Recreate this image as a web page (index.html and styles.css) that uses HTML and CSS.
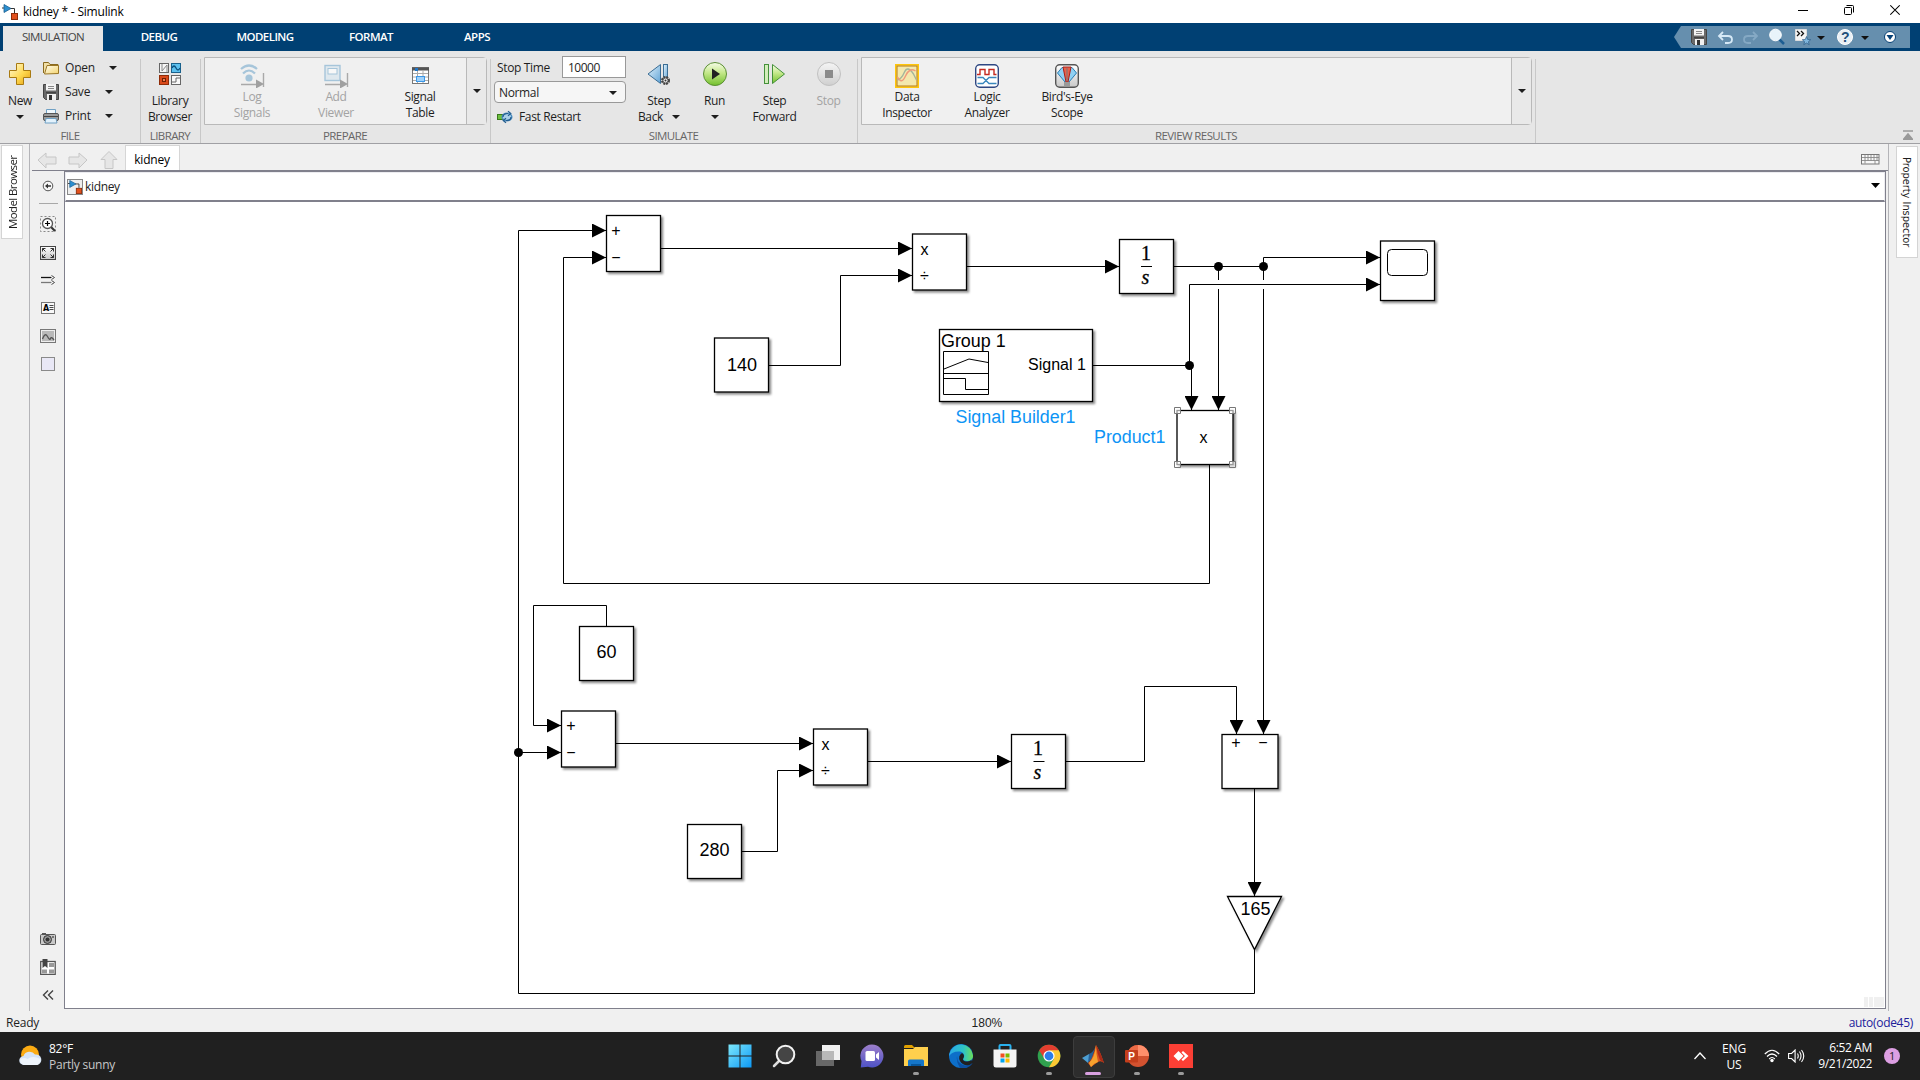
FILE: index.html
```html
<!DOCTYPE html>
<html lang="en">
<head>
<meta charset="utf-8">
<title>kidney * - Simulink</title>
<link rel="stylesheet" href="styles.css">
</head>
<body>
<svg class="defs" width="0" height="0" aria-hidden="true">
  <defs>
    <linearGradient id="gold" x1="0" y1="0" x2="1" y2="1"><stop offset="0" stop-color="#fffbe0"/><stop offset=".55" stop-color="#ffd94f"/><stop offset="1" stop-color="#e09a10"/></linearGradient>
    <linearGradient id="folder" x1="0" y1="0" x2="1" y2="1"><stop offset="0" stop-color="#fffdf0"/><stop offset="1" stop-color="#f3d36c"/></linearGradient>
    <linearGradient id="green" x1="0" y1="0" x2="0" y2="1"><stop offset="0" stop-color="#f6fce8"/><stop offset=".45" stop-color="#c4e88a"/><stop offset="1" stop-color="#72c02c"/></linearGradient>
    <linearGradient id="blue" x1="0" y1="0" x2="1" y2="1"><stop offset="0" stop-color="#e4f3fc"/><stop offset="1" stop-color="#5fa3d6"/></linearGradient>
    <linearGradient id="grey" x1="0" y1="0" x2="0" y2="1"><stop offset="0" stop-color="#f5f5f5"/><stop offset="1" stop-color="#cfcfcf"/></linearGradient>
    <linearGradient id="paper" x1="0" y1="0" x2="0" y2="1"><stop offset="0" stop-color="#fff"/><stop offset="1" stop-color="#c8c8c8"/></linearGradient>
    <symbol id="i-model" viewBox="0 0 16 16"><path d="M0 4h3M8 4.500h4.500V9" fill="none" stroke="#333" stroke-width="1"/><path d="M2 .5v8l7-4z" fill="#2b8fd0" stroke="#1d5f91" stroke-width=".8"/><rect x="9.500" y="9.500" width="6" height="6" fill="#e2501c" stroke="#8c2c0a"/></symbol>
    <symbol id="i-save" viewBox="0 0 16 16"><path d="M.5.5h15v15h-13l-2-2z" fill="#6a6a6a" stroke="#444"/><rect x="3" y="0" width="10" height="6.500" fill="#f4f4f4"/><path d="M5 2.500h6M5 4.500h6" stroke="#888"/><rect x="3" y="8" width="10" height="1.500" fill="#444"/><rect x="4" y="10" width="9" height="6" fill="#f0f0f0"/><rect x="6" y="11" width="3" height="5" fill="#333"/></symbol>
    <symbol id="i-caret" viewBox="0 0 8 4"><path d="M0 0h8L4 4z" fill="currentColor"/></symbol>
    <filter id="shadow" x="-20%" y="-20%" width="150%" height="150%"><feDropShadow dx="2" dy="2" stdDeviation="1.300" flood-color="#000" flood-opacity=".45"/></filter>
    <marker id="arrow" viewBox="0 0 14 14" refX="14" refY="7" markerWidth="14" markerHeight="14" markerUnits="userSpaceOnUse" orient="auto"><path d="M0 0L14 7L0 14z"/></marker>
  </defs>
</svg>

<header class="titlebar">
  <svg class="app-icon" width="16" height="16"><use href="#i-model"/></svg>
  <span class="app-title">kidney * - Simulink</span>
  <div class="window-buttons">
    <svg width="10" height="16" viewBox="0 0 10 16"><path d="M0 8.500h10" stroke="#000"/></svg>
    <svg width="10" height="16" viewBox="0 0 10 16" fill="none" stroke="#000"><rect x=".5" y="5.500" width="7" height="7" rx="1"/><path d="M2.500 3.500h6q1 0 1 1v6"/></svg>
    <svg width="10" height="16" viewBox="0 0 10 16"><path d="M.3 3.300l9.400 9.400M9.700 3.300L.3 12.700" stroke="#000" stroke-width="1.100"/></svg>
  </div>
</header>

<nav class="tabs">
  <div class="tab active">SIMULATION</div><div class="tab t2">DEBUG</div><div class="tab t3">MODELING</div><div class="tab t4">FORMAT</div><div class="tab t5">APPS</div>
  <div class="quick">
    <svg width="236" height="22" viewBox="1674 26 236 22">
      <path d="M1681 26h229v22h-229l-7-11z" fill="#668fae"/>
      <use href="#i-save" x="1691" y="29" width="16" height="16"/>
      <path d="M1723 32l-4 4 4 4M1720 36h8q4 0 4 3.500t-4 3.500h-3" fill="none" stroke="#d6e9f6" stroke-width="1.800"/>
      <path d="M1753 32l4 4-4 4M1756 36h-8q-4 0-4 3.500t4 3.500h3" fill="none" stroke="#85a9c4" stroke-width="1.800"/>
      <path d="M1779 39l5 5" stroke="#1d5d92" stroke-width="2.500"/><circle cx="1775.500" cy="35" r="5.800" fill="#e8f3fa" stroke="#fff"/>
      <path d="M1795.500 29.500h11v11h-11z" fill="#f4f4f4" stroke="#ddd"/><path d="M1797 31l2.500 2.500-2.500 2.500M1801 31l2.500 2.500-2.500 2.500" fill="none" stroke="#111" stroke-width="1.300"/>
      <path d="M1806.500 36.500l1.200 3 3 .2-2.300 2 .8 3-2.700-1.700-2.700 1.700.8-3-2.300-2 3-.2z" fill="#7fb6dd" stroke="#2c5c86" stroke-width=".7"/>
      <use href="#i-caret" x="1817" y="36" width="8" height="4" color="#111"/>
      <circle cx="1845" cy="37" r="7.500" fill="#e9eff4" stroke="#fff"/><text x="1845" y="42" text-anchor="middle" class="help-mark">?</text>
      <use href="#i-caret" x="1861" y="36" width="8" height="4" color="#111"/>
      <circle cx="1890" cy="37" r="5.500" fill="#fff" stroke="#054075" stroke-width="1"/><path d="M1886.500 35h7l-3.500 5z" fill="#054075"/>
    </svg>
  </div>
</nav>

<section class="ribbon">
  <div class="group g-file">
    <div class="group-body">
      <div class="big new">
        <svg width="22" height="22" viewBox="0 0 22 22"><path d="M7.500.5h7v7h7v7h-7v7h-7v-7h-7v-7h7z" fill="url(#gold)" stroke="#a87a12"/></svg>
        <span>New</span><svg class="caret" width="8" height="4"><use href="#i-caret"/></svg>
      </div>
      <div class="file-rows">
        <div class="file-row"><svg width="16" height="14" viewBox="0 0 16 14"><path d="M.5 12V1.500h5l1.500 2h8V6" fill="#f1dfa6" stroke="#8a6a1f"/><path d="M1.500 13L4 4.500h11.500v8z" fill="url(#folder)" stroke="#9a7625"/></svg><span class="w1">Open</span><svg width="8" height="4"><use href="#i-caret"/></svg></div>
        <div class="file-row"><svg width="16" height="16"><use href="#i-save"/></svg><span>Save</span><svg width="8" height="4"><use href="#i-caret"/></svg></div>
        <div class="file-row"><svg width="16" height="16" viewBox="0 0 16 16"><path d="M3.500 6V1.500h9V6" fill="#eef7fd" stroke="#6fa0c4"/><rect x=".5" y="5.500" width="15" height="7" rx="1.500" fill="#9a9a9a" stroke="#555"/><path d="M1 8.500h14" stroke="#444"/><path d="M3 10.500h10l1 4.500H2z" fill="#e3f2fc" stroke="#6fa0c4"/></svg><span>Print</span><svg width="8" height="4"><use href="#i-caret"/></svg></div>
      </div>
    </div>
    <div class="group-label">FILE</div>
  </div>

  <div class="group g-library">
    <div class="group-body">
      <div class="big">
        <svg width="22" height="22" viewBox="0 0 22 22"><rect x=".5" y=".5" width="9" height="9" fill="#f6f6f6" stroke="#666"/><path d="M3 1v7l5-6v7" fill="none" stroke="#888"/><rect x="12.500" y=".5" width="9" height="9" fill="#5cc0ee" stroke="#19618c"/><path d="M13 5q2-4 4 0t4 0" fill="none" stroke="#0b4f7c" stroke-width="1.300"/><rect x=".5" y="12.500" width="9" height="9" fill="#d9491a" stroke="#8f2c08"/><rect x="3.500" y="15.500" width="3" height="3" fill="#ef8050" stroke="#6d1f04"/><rect x="12.500" y="12.500" width="9" height="9" fill="#f8f8f8" stroke="#666"/><path d="M13 19h4v-4h4" fill="none" stroke="#666"/></svg>
        <span>Library</span><span>Browser</span>
      </div>
    </div>
    <div class="group-label">LIBRARY</div>
  </div>

  <div class="group g-prepare">
    <div class="group-body">
      <div class="gallery">
        <div class="tool disabled"><svg width="26" height="24" viewBox="0 0 26 24"><path d="M2 5q8-7 16 0M4 9.500q6-6 12 0" fill="none" stroke="#a6c5da" stroke-width="2.200"/><circle cx="10" cy="14" r="3.600" fill="#a6c5da"/><path d="M2 20.500h16M24.500 9v14" stroke="#a9a9a9" stroke-width="1.400"/><path d="M17 15.500v9l8-4.500z" fill="#a0a0a0"/></svg><span>Log</span><span>Signals</span></div>
        <div class="tool disabled"><svg width="26" height="24" viewBox="0 0 26 24"><rect x="2" y="1.500" width="15" height="15" fill="#dfe8ee" stroke="#a6c5da" stroke-width="1.400"/><rect x="5" y="4.500" width="9" height="5.500" fill="#f8f8f8" stroke="#a6c5da"/><path d="M2 20.500h16M24.500 9v14" stroke="#a9a9a9" stroke-width="1.400"/><path d="M17 15.500v9l8-4.500z" fill="#a0a0a0"/></svg><span>Add</span><span>Viewer</span></div>
        <div class="tool"><svg width="26" height="24" viewBox="0 0 26 24"><rect x="5.500" y="3.500" width="16" height="16" fill="#fff" stroke="#777"/><path d="M5 5h17" stroke="#555" stroke-width="3"/><path d="M8 5.500h3" stroke="#1f75c7" stroke-width="3"/><path d="M6 9.500h15M6 13h15M6 16.500h15M10.500 7v12M16 7v12" stroke="#aaa"/><rect x="9.500" y="12.500" width="8" height="5" fill="#9fd1fa" stroke="#3c97e6"/></svg><span>Signal</span><span>Table</span></div>
        <div class="gallery-more"><svg width="8" height="4"><use href="#i-caret"/></svg></div>
      </div>
    </div>
    <div class="group-label">PREPARE</div>
  </div>

  <div class="group g-simulate">
    <div class="group-body">
      <div class="sim-form">
        <div class="stop-row"><span>Stop Time</span><div class="field">10000</div></div>
        <div class="select"><span>Normal</span><svg width="8" height="4"><use href="#i-caret"/></svg></div>
        <div class="restart"><svg width="16" height="14" viewBox="0 0 16 14"><rect x=".5" y="4.500" width="5" height="5" fill="#6fc040" stroke="#3a7a1c"/><ellipse cx="10" cy="7" rx="4.800" ry="3.800" fill="#a9cfe8" stroke="#4d8dc0" stroke-width="1.500"/><path d="M6 7q0-3.500 5-3.500M11 1.200l2.800 2.300L11 5.800M14 7q0 3.500-5 3.500M9 8.200l-2.800 2.300L9 12.800" fill="none" stroke="#235d8e" stroke-width="1.200"/></svg><span>Fast Restart</span></div>
      </div>
      <div class="big s-back">
        <svg width="24" height="24" viewBox="0 0 24 24"><path d="M13.500 2.500v19L1 12z" fill="url(#blue)" stroke="#3b6d94"/><rect x="16.500" y="2.500" width="4" height="16" fill="url(#blue)" stroke="#3b6d94"/><circle cx="18.500" cy="18.500" r="3.500" fill="#eee" stroke="#444" stroke-width="2" stroke-dasharray="2 .8"/><circle cx="18.500" cy="18.500" r="2.600" fill="#eee" stroke="#444"/><circle cx="18.500" cy="18.500" r="1" fill="#333"/></svg>
        <span>Step</span><span class="with-caret">Back <svg width="8" height="4"><use href="#i-caret"/></svg></span>
      </div>
      <div class="big s-run">
        <svg width="24" height="24" viewBox="0 0 24 24"><circle cx="12" cy="12" r="11.500" fill="url(#green)" stroke="#5b8f35"/><path d="M9 6.500v11l8-5.500z" fill="#222"/></svg>
        <span>Run</span><svg class="caret" width="8" height="4"><use href="#i-caret"/></svg>
      </div>
      <div class="big s-fwd">
        <svg width="24" height="24" viewBox="0 0 24 24"><rect x="1.500" y="2.500" width="4" height="19" fill="#d3edbb" stroke="#44913a"/><path d="M9.500 2.500v19l12-9.500z" fill="url(#green)" stroke="#44913a"/></svg>
        <span>Step</span><span>Forward</span>
      </div>
      <div class="big s-stop disabled">
        <svg width="24" height="24" viewBox="0 0 24 24"><circle cx="12" cy="12" r="11.500" fill="url(#grey)" stroke="#c0c0c0"/><rect x="8" y="8" width="8" height="8" fill="#8b8b8b"/></svg>
        <span>Stop</span>
      </div>
    </div>
    <div class="group-label">SIMULATE</div>
  </div>

  <div class="group g-review">
    <div class="group-body">
      <div class="gallery">
        <div class="tool"><svg width="24" height="24" viewBox="0 0 24 24"><rect x=".8" y=".8" width="22.400" height="22.400" fill="#f3e8ae" stroke="#ffc60a" stroke-width="1.600"/><rect x="2" y="2" width="20" height="20" fill="none" stroke="#b87c12"/><path d="M2.500 16q4-1 7-8t9 2l3 6" fill="none" stroke="#a3b59c" stroke-width="1.400"/><path d="M2.500 13q4 8 8-1t10-5" fill="none" stroke="#ef9a7b" stroke-width="1.400"/></svg><span>Data</span><span>Inspector</span></div>
        <div class="tool"><svg width="24" height="24" viewBox="0 0 24 24"><rect x=".7" y=".7" width="22.600" height="22.600" rx="4" fill="#fff" stroke="#2e4782" stroke-width="1.400"/><path d="M2 10.500h3v-5h5v5h4v-5h5v5h2.500" fill="none" stroke="#c42a20" stroke-width="1.400"/><path d="M2.500 13.500H8l6 6h7.500M2.500 19.500H8l6-6h7.500" fill="none" stroke="#3a87bd" stroke-width="1.300"/></svg><span>Logic</span><span>Analyzer</span></div>
        <div class="tool"><svg width="24" height="24" viewBox="0 0 24 24"><rect x=".7" y=".7" width="22.600" height="22.600" rx="4" fill="url(#paper)" stroke="#555" stroke-width="1.400"/><path d="M10 18L2.500 9 7 3.500h10L21.500 9 14 18z" fill="#8fd0f3" stroke="#277db4"/><path d="M8 3h8l-3 15h-2z" fill="#e8604a" stroke="#a82019"/><path d="M9 18h6v4.500H9z" fill="#999"/><path d="M12 4v13" stroke="#777"/></svg><span>Bird's-Eye</span><span>Scope</span></div>
        <div class="gallery-more"><svg width="8" height="4"><use href="#i-caret"/></svg></div>
      </div>
    </div>
    <div class="group-label">REVIEW RESULTS</div>
  </div>
  <div class="ribbon-end"><svg width="10" height="10" viewBox="0 0 10 10"><path d="M0 1h10M0 10l5-6 5 6z" fill="#999" stroke="#999" stroke-width="1.500"/></svg></div>
</section>

<main class="workspace">
  <aside class="side left"><div class="side-tab model">Model Browser</div></aside>
  <section class="editor">
    <div class="doc-row">
      <svg class="nav-icons" width="82" height="18" viewBox="37 150 82 18" fill="#e6e6e6" stroke="#c6c6c6">
        <path d="M38 159l8-7v4h10v7H46v4z"/><path d="M87 159l-8-7v4H69v7h10v4z"/><path d="M109 150.500l8 8h-4v9h-8v-9h-4z"/>
      </svg>
      <div class="doc-tab">kidney</div>
      <svg class="keyboard" width="19" height="11" viewBox="0 0 19 11"><rect x=".5" y=".5" width="17.500" height="9.500" fill="#f8f8f8" stroke="#777"/><path d="M1 3.500h17M1 6.500h17M4 .5v9M14 7v3M7 1v6M10 1v6M13 1v6M16 1v6" stroke="#888" stroke-width=".9"/></svg>
    </div>
    <div class="editor-body">
      <div class="palette">
        <svg width="16" height="16" viewBox="0 0 16 16"><circle cx="8" cy="8" r="4.800" fill="#f6f6f6" stroke="#555"/><path d="M11 8H7" stroke="#333" stroke-width="1.500"/><path d="M8 5.500v5L5 8z" fill="#333"/></svg>
        <hr class="palette-line">
        <svg width="16" height="16" viewBox="0 0 16 16"><rect x=".5" y=".5" width="15" height="15" fill="none" stroke="#888" stroke-dasharray="2 2"/><path d="M11 11l4 4" stroke="#333" stroke-width="2.200"/><circle cx="7.500" cy="7.500" r="5" fill="#fff" stroke="#555" stroke-width="1.300"/><path d="M5 7.500h5M7.500 5v5" stroke="#000" stroke-width="1.200"/></svg>
        <svg width="16" height="14" viewBox="0 0 16 14"><rect x=".5" y=".5" width="15" height="13" fill="url(#paper)" stroke="#444"/><path d="M2.500 5.500v-3h3M2.500 2.500l3 3M10.500 2.500h3v3M13.500 2.500l-3 3M2.500 8.500v3h3M2.500 11.500l3-3M13.500 8.500v3h-3M13.500 11.500l-3-3" fill="none" stroke="#333"/></svg>
        <svg width="16" height="12" viewBox="0 0 16 12"><path d="M1 3.500h12" stroke="#111" stroke-width="1.300"/><path d="M1 8.500h12" stroke="#777" stroke-width="1.300"/><path d="M11.500 1.500l3 2-3 2M11.500 6.500l3 2-3 2" fill="#fff" stroke="#444"/></svg>
        <svg width="16" height="14" viewBox="0 0 16 14"><rect x="1.500" y="1.500" width="13" height="11" fill="#f8f8f8" stroke="#777"/><text x="3" y="10" class="note-letter">A</text><path d="M9.500 4.500h4M9.500 6.500h4M9.500 8.500h4" stroke="#333" stroke-width=".9"/></svg>
        <svg width="16" height="14" viewBox="0 0 16 14"><rect x=".5" y=".5" width="15" height="13" fill="#eee" stroke="#777"/><rect x="2" y="2" width="12" height="10" fill="#b9b9b9"/><path d="M2.500 10q2.500-7 5-2.500t3 2 3.500 1.500" fill="none" stroke="#555" stroke-width="1.300"/></svg>
        <svg width="16" height="14" viewBox="0 0 16 14"><rect x="1.500" y=".5" width="13" height="13" fill="#e9e8f6" stroke="#8a8a8a"/></svg>
        <svg class="push" width="16" height="12" viewBox="0 0 16 12"><path d="M2 0h4v2H2z" fill="#555"/><rect x=".5" y="1.500" width="15" height="10" rx="1" fill="#c9c9c9" stroke="#555"/><circle cx="7.500" cy="6.500" r="4" fill="#999" stroke="#333"/><circle cx="7.500" cy="6.500" r="2" fill="#333"/><path d="M12 4h2" stroke="#222"/></svg>
        <svg width="16" height="16" viewBox="0 0 16 16"><rect x=".7" y="2.500" width="14.500" height="13" fill="#fff" stroke="#555" stroke-width="1.300"/><path d="M2 10.500h5v4H2zM9 4h5v4H9zM9 10.500h5v4H9z" fill="#999"/><path d="M2.500 0h5v9L5 7 2.500 9z" fill="#444"/></svg>
        <svg width="16" height="12" viewBox="0 0 16 12"><path d="M8 1.500L3.500 6 8 10.500M13 1.500L8.500 6l4.500 4.500" fill="none" stroke="#444" stroke-width="1.400"/></svg>
      </div>
      <div class="canvas-frame">
        <div class="breadcrumb"><span class="crumb-icon"><svg width="14" height="14"><use href="#i-model"/></svg></span><span>kidney</span><svg class="crumb-caret" width="9" height="5" viewBox="0 0 8 4" preserveAspectRatio="none"><path d="M0 0h8L4 4z"/></svg></div>
        <svg class="diagram" width="1820" height="806" viewBox="65 202 1820 806">
          <g class="blocks" filter="url(#shadow)">
            <rect x="606.500" y="215.500" width="54" height="56"/>
            <rect x="912.500" y="234" width="54" height="56"/>
            <rect x="714.500" y="338" width="54" height="54"/>
            <rect x="1119.500" y="239.500" width="54" height="54"/>
            <rect x="1380.500" y="241" width="54" height="59.500"/>
            <rect x="939.500" y="329.500" width="153" height="72"/>
            <rect x="1177" y="410.500" width="56" height="54"/>
            <rect x="579.500" y="626.500" width="54" height="54"/>
            <rect x="561.500" y="711" width="54" height="56"/>
            <rect x="813.500" y="729" width="54" height="56"/>
            <rect x="687.500" y="824.500" width="54" height="54"/>
            <rect x="1011.500" y="734.500" width="54" height="54"/>
            <rect x="1222" y="734.500" width="56" height="54"/>
            <path d="M1227.500 896.500h54l-27 53z"/>
          </g>
          <g class="wires">
            <path d="M1218.500 266.500V410" marker-end="url(#arrow)"/>
            <path d="M1254.500 950V993.500H518.500V230.500H606" marker-end="url(#arrow)"/>
            <path d="M1209.500 465V583.500H563.500V257.500H606" marker-end="url(#arrow)"/>
            <path d="M661 248.500H912" marker-end="url(#arrow)"/>
            <path d="M769 365.500H840.500V275.500H912" marker-end="url(#arrow)"/>
            <path d="M967 266.500H1119" marker-end="url(#arrow)"/>
            <path d="M1174 266.500H1263.500V257.500H1380" marker-end="url(#arrow)"/>
            <path d="M1263.500 266.500V734" marker-end="url(#arrow)"/>
            <path d="M1218.500 280v9M1263.500 280v9" class="hop"/>
            <path d="M1093 365.500H1189.500V284.500H1380" marker-end="url(#arrow)"/>
            <path d="M1191.500 365.500V410" marker-end="url(#arrow)"/>
            <path d="M606.500 626V605.500H533.500V725.500H561" marker-end="url(#arrow)"/>
            <path d="M518.500 752.500H561" marker-end="url(#arrow)"/>
            <path d="M616 743.500H813" marker-end="url(#arrow)"/>
            <path d="M742 851.500H777.500V770.500H813" marker-end="url(#arrow)"/>
            <path d="M868 761.500H1011" marker-end="url(#arrow)"/>
            <path d="M1066 761.500H1144.500V686.500H1236.500V734" marker-end="url(#arrow)"/>
            <path d="M1254.500 789V896" marker-end="url(#arrow)"/>
          </g>
          <circle cx="1218.500" cy="266.500" r="4.500"/><circle cx="1263.500" cy="266.500" r="4.500"/><circle cx="1189.500" cy="365.500" r="4.500"/><circle cx="518.500" cy="752.500" r="4.500"/>
          <g class="glyphs">
            <rect x="1387.500" y="249.500" width="40" height="26" rx="4"/>
            <path d="M943.500 351.500h45v43h-45zM943.500 373.500h45M944 369l25-10 19 3.500M944 378.500h21.500v11h22.500M1141 266.500h11M1033.500 761.500h11"/>
          </g>
          <g class="handles"><path d="M1174.500 407.500h6v6h-6zM1229.500 407.500h6v6h-6zM1174.500 461.500h6v6h-6zM1229.500 461.500h6v6h-6z"/></g>
          <g class="port">
            <text x="616" y="236">+</text><text x="616" y="263">−</text>
            <text x="924.500" y="255">x</text><text x="924.500" y="281">÷</text>
            <text x="571" y="731">+</text><text x="571" y="758">−</text>
            <text x="825.500" y="750">x</text><text x="825.500" y="776">÷</text>
            <text x="1236" y="748">+</text><text x="1263" y="748">−</text>
            <text x="1203.500" y="443">x</text>
          </g>
          <g class="value">
            <text x="742" y="371">140</text><text x="606.500" y="658">60</text><text x="714.500" y="856">280</text><text x="1255.500" y="915">165</text>
          </g>
          <g class="math"><text x="1146" y="260">1</text><text x="1145.500" y="284" class="var">s</text><text x="1038" y="755">1</text><text x="1037.500" y="779" class="var">s</text></g>
          <text x="941" y="347" class="label">Group 1</text>
          <text x="1028" y="370" class="port-label">Signal 1</text>
          <text x="955.500" y="423" class="name">Signal Builder1</text>
          <text x="1094" y="443" class="name">Product1</text>
          <path d="M1864 997h4v10h-4zM1869 997h4v10h-4zM1874 997h10v10h-10z" fill="#f0f0f0"/>
        </svg>
      </div>
    </div>
  </section>
  <aside class="side right"><div class="side-tab inspector">Property Inspector</div></aside>
</main>

<footer class="status"><span>Ready</span><span class="zoom">180%</span><span class="solver">auto(ode45)</span></footer>

<footer class="taskbar">
  <div class="weather">
    <svg width="24" height="22" viewBox="0 0 24 22"><circle cx="11" cy="9.500" r="9" fill="#fbab13"/><path d="M5 20a4.500 4.500 0 0 1-.5-9 6.500 6.500 0 0 1 11.500-1.500 5.300 5.300 0 0 1 2 10.500z" fill="#d6e4f6"/><path d="M5 20a4.500 4.500 0 0 1-3.500-6q4-2 7 0 5-4 13 0 0 6-5 6z" fill="#eef4fb"/></svg>
    <div class="weather-text"><div class="temp">82°F</div><div class="sky">Partly sunny</div></div>
  </div>
  <div class="apps">
    <div class="app"><svg width="24" height="24" viewBox="0 0 24 24"><defs><linearGradient id="win" gradientUnits="userSpaceOnUse" x1="0" y1="0" x2="24" y2="24"><stop offset="0" stop-color="#7fe9fb"/><stop offset="1" stop-color="#0a97f5"/></linearGradient></defs><path d="M.5.500h11v11h-11zM12.500.500h11v11h-11zM.5 12.500h11v11h-11zM12.500 12.500h11v11h-11z" fill="url(#win)"/></svg></div>
    <div class="app"><svg width="24" height="24" viewBox="0 0 24 24"><path d="M8 16l-6 6" stroke="#ddd" stroke-width="2.500" stroke-linecap="round"/><circle cx="13.500" cy="10.500" r="8.800" fill="#454545" stroke="#f2f2f2" stroke-width="2"/></svg></div>
    <div class="app"><svg width="24" height="24" viewBox="0 0 24 24"><path d="M6 1h18v15H6z" fill="#f1f1f1"/><path d="M0 7h18v15H0z" fill="#686868"/><path d="M6 7h12v9H6z" fill="#b9b9b9"/></svg></div>
    <div class="app"><svg width="24" height="24" viewBox="0 0 24 24"><defs><linearGradient id="chat" x1="0" y1="0" x2="0" y2="1"><stop offset="0" stop-color="#9d7fca"/><stop offset="1" stop-color="#4d52c6"/></linearGradient></defs><path d="M12 .500a11.500 11.500 0 1 1-4 22.300L.800 23.500 1.500 17A11.500 11.500 0 0 1 12 .500z" fill="url(#chat)"/><rect x="5.500" y="7" width="9.500" height="10" rx="1.500" fill="#fff"/><path d="M16 10.500l3-2.500v8l-3-2.500z" fill="#fff"/></svg></div>
    <div class="app run"><svg width="24" height="24" viewBox="0 0 24 24"><path d="M0 2.500Q0 1 1.500 1H8l3 3H0z" fill="#e1a000"/><path d="M0 5h9l2-2h13v19H0z" fill="#ffd04d"/><path d="M4 22v-5q0-1.500 1.500-1.500h13q1.500 0 1.500 1.500v5z" fill="#1576c9"/><path d="M7 22v-2h10v2z" fill="#07569b"/></svg></div>
    <div class="app"><svg width="24" height="24" viewBox="0 0 24 24"><defs><linearGradient id="edge" x1="0" y1="0" x2="1" y2="0"><stop offset="0" stop-color="#2aa9e8"/><stop offset=".6" stop-color="#2fc4c4"/><stop offset="1" stop-color="#6cdf58"/></linearGradient></defs><circle cx="12" cy="12" r="12" fill="#0d6fc9"/><path d="M.3 10A12 12 0 0 1 24 11.500c.2 4-3 5.500-6 5.500s-5-1.500-3.500-3c2-3-.5-6.500-5-6.500S2 9 .3 12z" fill="url(#edge)"/><path d="M8 12q0 8 8 9.500 4 0 6-3l1.500 1A12 12 0 0 1 11 24Q7 18 8 12z" fill="#0b4fa0"/><path d="M14.500 14c-1.500 2 .8 3.700 4 3.500q2.500-.2 4-1.500l1 3-3 2q-7 1-9.500-4t2-8q3 2 1.500 5z" fill="#202020"/></svg></div>
    <div class="app"><svg width="24" height="24" viewBox="0 0 24 24"><path d="M6.500 7V2q0-1 1-1h9q1 0 1 1v5" fill="none" stroke="#29b1ee" stroke-width="2"/><path d="M.500 5.500h23V21q0 2.500-2.500 2.500H3Q.500 23.500.500 21z" fill="#f4f4f4"/><path d="M7.500 9.500h4v4h-4z" fill="#f25022"/><path d="M12.500 9.500h4v4h-4z" fill="#7fba00"/><path d="M7.500 14.500h4v4h-4z" fill="#00a4ef"/><path d="M12.500 14.500h4v4h-4z" fill="#ffb900"/></svg></div>
    <div class="app run"><svg width="24" height="24" viewBox="0 0 24 24"><circle cx="12" cy="12" r="11.300" fill="#30a14e"/><path d="M12 12L2.200 6.300A11.300 11.300 0 0 1 21.800 6.300z" fill="#e33e2f"/><path d="M12 6.300h9.800A11.300 11.300 0 0 1 12 23.300l5-8.500z" fill="#fcc934"/><path d="M2.200 6.300L7.500 15 12 7z" fill="#e33e2f"/><circle cx="12" cy="12" r="5.600" fill="#fff"/><circle cx="12" cy="12" r="4.400" fill="#2b7de9"/></svg></div>
    <div class="app current"><svg width="24" height="24" viewBox="0 0 24 24"><path d="M1 14l7-4 3 3-4 6z" fill="#4d9ed2"/><path d="M8 10q5-2 7-9l-4 13-4 5z" fill="#285f94"/><path d="M15 1q4 6 8 18-3-3-6-1t-7 5l-3-4q4-2 8-18z" fill="#d9531e"/><path d="M15 1q0 9 2 17-4 1-7 5l-2-4q6-6 7-18z" fill="#f6a12d"/><path d="M15 1q4 6 8 18l-4-3q-3-7-4-15z" fill="#a82a18"/></svg></div>
    <div class="app run"><svg width="24" height="24" viewBox="0 0 24 24"><circle cx="13" cy="12" r="11" fill="#d35230"/><path d="M13 1a11 11 0 0 1 11 11H13z" fill="#ff8f6b"/><path d="M2.500 9A11 11 0 0 1 13 1v11H2.500z" fill="#ed6c47"/><rect x="0" y="6" width="13" height="12.500" rx="1" fill="#c43e1c"/><text x="6.500" y="16" text-anchor="middle" class="ppt">P</text></svg></div>
    <div class="app run"><svg width="24" height="24" viewBox="0 0 24 24"><path d="M0 0h24v24H0z" fill="#fb3f35"/><path d="M9.500 7l5 5-5 5-5-5zM12.500 8.500L14 7l5.500 5L14 17l-1.500-1.500L16 12z" fill="#fff"/></svg></div>
  </div>
  <div class="tray">
    <svg width="12" height="8" viewBox="0 0 12 8"><path d="M.5 7L6 1l5.500 6" fill="none" stroke="#fff" stroke-width="1.300"/></svg>
    <div class="lang">ENG<br>US</div>
    <svg width="16" height="14" viewBox="0 0 16 14"><path d="M.800 5q7.200-7.500 14.400 0M3 7.500q5-5 10 0M5.200 10q2.800-3 5.600 0" fill="none" stroke="#fff" stroke-width="1.200"/><circle cx="8" cy="11.500" r="1.700" fill="#fff"/></svg>
    <svg class="sound" width="17" height="14" viewBox="0 0 17 14"><path d="M.600 4.500h3l3.500-3.500v12L3.600 9.500h-3zM9.500 4.500q1.500 2.500 0 5M11.500 2.500q3 4.500 0 9M13.500 1q4.500 6 0 12" fill="none" stroke="#fff" stroke-width="1.100"/></svg>
    <div class="clock">6:52 AM<br>9/21/2022</div>
    <div class="badge">1</div>
  </div>
</footer>
</body>
</html>
```
FILE: styles.css
```css
* { box-sizing: border-box; }
body { margin: 0; width: 1920px; height: 1080px; overflow: hidden; display: flex; flex-direction: column; background: #f0f0f0; color: #1e1e1e; font: 12px/16px "Open Sans", "Noto Sans", sans-serif; letter-spacing: -0.35px; white-space: nowrap; }
svg { display: block; flex: none; }
.defs { position: absolute; }

.titlebar { height: 23px; flex: none; background: #fff; color: #000; display: flex; align-items: center; }
.app-icon { margin: 0 5px 0 2px; }
.app-title { letter-spacing: -0.2px; padding-top: 1px; }
.window-buttons { margin-left: auto; display: flex; gap: 36px; padding-right: 20px; margin-top: -3px; }

.tabs { height: 28px; flex: none; background: #004073; color: #fff; display: flex; padding-left: 3px; }
.tab { margin-top: 3px; height: 25px; line-height: 22px; text-align: center; font-weight: 600; font-size: 11.5px; letter-spacing: -0.55px; }
.tab.active { width: 100px; background: #e6e6e6; color: #444; font-weight: 400; letter-spacing: -0.65px; }
.t2 { width: 112px; }
.t3 { width: 100px; }
.t4 { width: 112px; }
.t5 { width: 100px; }
.quick { margin-left: auto; padding: 3px 10px 0 0; }
.help-mark { font: bold 14px "Liberation Sans", sans-serif; fill: #23507a; }

.ribbon { height: 93px; flex: none; background: #e6e6e6; border-bottom: 1px solid #a0a0a4; display: flex; }
.group { position: relative; display: flex; flex-direction: column; padding-top: 6px; }
.group::after { content: ""; position: absolute; right: -1px; top: 8px; bottom: 0; width: 1px; background: #c8c8c8; }
.group-body { height: 71px; display: flex; }
.group-label { text-align: center; color: #666; line-height: 15px; font-size: 11.5px; letter-spacing: -0.6px; }
.g-file { width: 140px; }
.g-library { width: 60px; }
.g-prepare { width: 290px; padding-left: 4px; }
.g-prepare .group-label { padding-right: 4px; }
.g-simulate { width: 367px; }
.g-review { width: 678px; padding-left: 4px; }
.g-review .group-label { padding-right: 4px; }
.big { display: flex; flex-direction: column; align-items: center; padding-top: 5px; }
.big > svg:first-child { height: 24px; margin-bottom: 7px; }
.big > .caret { margin-top: 6px; }
.new { width: 40px; }
.file-rows { display: flex; flex-direction: column; margin-top: -1px; padding-left: 1px; }
.file-row { height: 24px; display: flex; align-items: center; padding-left: 2px; }
.file-row span { width: 40px; margin-left: 6px; letter-spacing: -0.2px; }
.file-row .w1 { width: 44px; }
.g-library .big { width: 60px; }
.gallery { height: 68px; flex: 1; display: flex; margin-right: 3px; background: #f0f0f0; border: 1px solid #b9b9b9; border-radius: 0 4px 4px 0; }
.tool { display: flex; flex-direction: column; align-items: center; padding-top: 6px; }
.tool svg { margin-bottom: 1px; }
.g-prepare .tool { width: 84px; }
.g-prepare .tool:first-child { margin-left: 5px; }
.g-review .tool { width: 80px; }
.g-review .tool:first-child { margin-left: 5px; }
.gallery-more { margin-left: auto; width: 20px; border-left: 1px solid #b9b9b9; background: #e9e9e9; display: flex; align-items: center; justify-content: center; }
.disabled { color: #a3a3a3; }
.sim-form { width: 138px; padding-left: 4px; }
.stop-row { display: flex; align-items: center; height: 22px; margin-top: -1px; padding-left: 3px; }
.field { margin-left: auto; margin-right: 2px; width: 64px; height: 22px; border: 1px solid #999; background: #fff; padding: 3px 0 0 5px; letter-spacing: -0.5px; }
.select { margin-top: 3px; width: 132px; height: 22px; border: 1px solid #999; border-radius: 4px; background: #f6f6f6; display: flex; align-items: center; justify-content: space-between; padding: 1px 8px 0 4px; }
.stop-row span { padding-top: 1px; }
.restart { display: flex; align-items: center; gap: 6px; height: 27px; padding-left: 3px; }
.with-caret { display: flex; align-items: center; gap: 9px; }
.s-back { width: 62px; }
.s-run { width: 49px; }
.s-fwd { width: 71px; }
.s-stop { width: 37px; }
.ribbon-end { flex: 1; display: flex; align-items: flex-end; justify-content: flex-end; padding: 0 7px 3px 0; }

.workspace { height: 867px; flex: none; display: flex; }
.side { flex: none; }
.left { width: 30px; border-right: 1px solid #b4b4b8; padding: 1px 0 0 1px; }
.right { width: 32px; border-left: 1px solid #b4b4b8; padding: 2px 0 0 7px; }
.side-tab { width: 22px; height: 94px; background: #fff; border: 1px solid #d4d4d4; writing-mode: vertical-rl; text-align: center; line-height: 21px; }
.model { transform: rotate(180deg); font-size: 11.5px; letter-spacing: -0.6px; }
.inspector { height: 112px; font-family: "DejaVu Sans Condensed", "DejaVu Sans", sans-serif; font-size: 11px; letter-spacing: -0.05px; }
.editor { width: 1858px; display: flex; flex-direction: column; }
.doc-row { height: 27px; margin-left: 2px; flex: none; display: flex; align-items: flex-end; border-bottom: 1px solid #80808c; }
.nav-icons { margin: 0 6px 1px 5px; }
.doc-tab { width: 55px; height: 25px; background: #fff; border: 1px solid #d6d6d6; border-bottom: 0; text-align: center; line-height: 28px; color: #000; letter-spacing: -0.2px; padding-right: 1px; }
.keyboard { margin: 0 8px 5px auto; }
.editor-body { display: flex; }
.palette { width: 34px; height: 839px; display: flex; flex-direction: column; align-items: center; padding: 7px 0 9px 2px; }
.palette svg { margin-bottom: 14.2px; }
.palette svg:first-child { margin-bottom: 9px; }
.palette-line { width: 19px; margin: 0 0 12px; border: 0; border-top: 1px solid #a8a8a8; }
.palette .push { margin-top: auto; }
.palette svg:last-child { margin-bottom: 0; }
.note-letter { font: bold 8px "DejaVu Sans", sans-serif; }
.canvas-frame { width: 1822px; height: 838px; border: 1px solid #80808c; background: #fff; }
.breadcrumb { height: 30px; display: flex; align-items: center; border: 1px solid #ececf0; border-bottom: 2px solid #80808c; padding: 1px 4px 0 1px; color: #222; }
.crumb-icon { width: 16px; height: 16px; border: 1px solid #888; background: #eee; margin-right: 2px; }
.crumb-caret { margin: -4px 0 0 auto; }

.blocks > * { fill: #fff; stroke: #000; stroke-width: 1.300; }
.wires path { fill: none; stroke: #000; stroke-width: 1; }
.wires .hop { stroke: #fff; stroke-width: 3; }
.glyphs > * { fill: none; stroke: #000; stroke-width: 1; }
.handles path { fill: #fff; fill-opacity: .6; stroke: #777; }
.diagram text { font-family: "Liberation Sans", sans-serif; letter-spacing: 0; }
.port text { font-size: 16px; text-anchor: middle; }
.value text { font-size: 18px; text-anchor: middle; }
.diagram .label { font-size: 17.900px; }
.diagram .port-label { font-size: 16px; }
.diagram .name { font-size: 17.850px; fill: #0d94f5; }
.diagram .math text { font-family: "Liberation Serif", serif; font-size: 20px; text-anchor: middle; stroke: #000; stroke-width: .3; }
.math .var { font-style: italic; }

.status { height: 21px; flex: none; display: flex; align-items: center; justify-content: space-between; padding: 2px 7px 0 6px; letter-spacing: -0.2px; }
.zoom { font-family: "Liberation Sans", sans-serif; letter-spacing: 0; padding-left: 86px; }
.solver { color: #21219a; letter-spacing: -0.3px; }

.taskbar { height: 48px; flex: none; background: #202020; color: #fff; display: flex; align-items: center; }
.weather { width: 718px; padding-left: 19px; display: flex; align-items: center; gap: 6px; letter-spacing: -0.25px; }
.weather-text { padding-top: 2px; }
.sky { color: #c8c8c8; }
.apps { display: flex; }
.app { position: relative; width: 44.1px; height: 48px; display: flex; align-items: center; justify-content: center; }
.run::after, .current::after { content: ""; position: absolute; bottom: 5px; width: 6px; height: 3px; border-radius: 2px; background: #9a9a9a; }
.current::before { content: ""; position: absolute; left: 2px; top: 4px; width: 40px; height: 40px; border: 1px solid #3d3d3d; border-radius: 4px; background: #2d2d2d; }
.current svg { position: relative; }
.current::after { width: 16px; background: #d8a0e0; }
.tray { margin-left: auto; display: flex; align-items: center; padding-right: 20px; letter-spacing: -0.2px; }
.lang { width: 44px; margin-left: 6px; text-align: center; margin-right: 8px; padding-top: 1px; }
.sound { margin-left: 8px; }
.clock { width: 67px; text-align: right; letter-spacing: -0.35px; }
.badge { margin-left: 12px; width: 16px; height: 16px; border-radius: 8px; background: #dd9fe3; color: #222; text-align: center; font-size: 11px; line-height: 16px; }
.ppt { font: bold 10px "Liberation Sans", sans-serif; fill: #fff; }
```
